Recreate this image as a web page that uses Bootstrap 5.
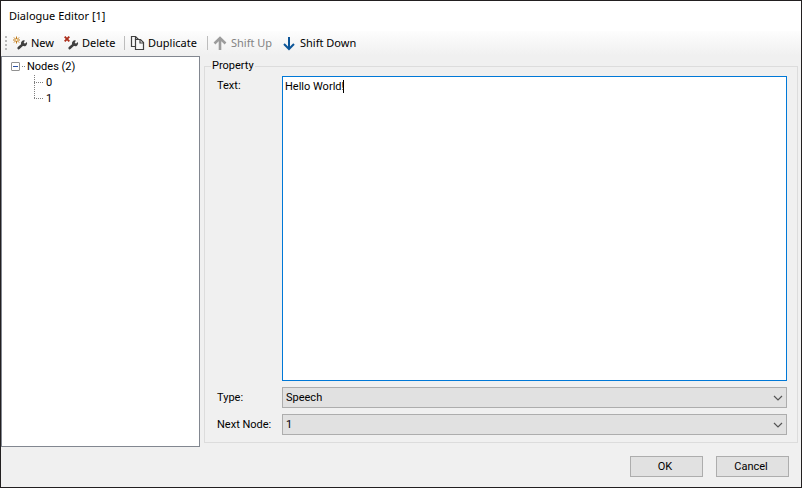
<!DOCTYPE html>
<html lang="en">
<head>
<meta charset="utf-8">
<meta name="viewport" content="width=device-width, initial-scale=1">
<title>Dialogue Editor [1]</title>
<link href="https://cdn.jsdelivr.net/npm/bootstrap@5.3.0/dist/css/bootstrap.min.css" rel="stylesheet">
<style>
body{font:11px/16px Roboto,"Liberation Sans",sans-serif;color:#000;background:#f0f0f0}
.window{border:1px solid #221f20}
.titlebar{font:11px/30px "Noto Sans","Open Sans",sans-serif;background:#fff;padding:0 8px}
.toolbar{font:11px/16px "Noto Sans","Open Sans",sans-serif;height:25px;background:linear-gradient(#fdfdfd,#f0f0f0);padding:0 0 2px 4px}
.grip{width:2px;height:14px;margin-right:6px;background:repeating-linear-gradient(#b8b8b8 0 2px,transparent 2px 4px)}
.tool{font:inherit;color:#000;border:0;background:none;padding:0;display:flex;align-items:center;gap:2px;white-space:nowrap}
.tool:disabled{color:#838383}
.tool svg{width:16px;height:16px;flex:none}
.w-new{width:51px}.w-delete{width:56px}.w-copy{width:73px}.w-up{width:69px}
.divider{width:1px;height:14px;margin:0 5px 0 4px;background:#bdbdbd}
.tree{width:199px;background:#fff;border:1px solid #828790;padding:0 9px}
.tree ul{list-style:none;margin:0;padding:0}
.root-row{gap:2px}
.root-name{padding-top:2px}
.toggler{width:9px;height:9px;padding:0;border:1px solid #919191;border-radius:1px;background:#fff;display:flex;align-items:center;justify-content:center}
.toggler::before{content:"";width:5px;height:1px;background:#2b52a5}
.stub{width:3px;border-top:1px dotted #808080}
.tree .branch{margin-left:23px}
.branch li{display:flex;height:16px;background:repeating-linear-gradient(#808080 0 1px,transparent 1px 2px) 0 0/1px 100% no-repeat}
.branch li:last-child{background-size:1px 8px}
.branch li::before{content:"";width:9px;margin:7px 3px 0 0;border-top:1px dotted #808080}
.workarea{padding:2px 3px 4px 4px}
.group{border:1px solid #dcdcdc;padding:2px 10px 7px 12px}
.group legend{float:none;width:auto;font-size:11px;line-height:16px;margin:0 0 0 -6px;padding:0 1px}
.form-grid{display:grid;grid-template-columns:65px 1fr;grid-template-rows:1fr 21px 21px;row-gap:6px}
.label-top{padding-top:2px}
.field-text{resize:none;border:1px solid #0078d7;padding:2px;background:#fff;font:inherit;color:#000;outline:0}
.caret{left:61px;top:4px;width:1px;height:13px;background:#000}
.combo{appearance:none;font:inherit;color:#000;border:1px solid #adadad;border-radius:0;padding:0 3px;background:#e1e1e1 url("data:image/svg+xml,%3Csvg xmlns='http://www.w3.org/2000/svg' width='10' height='6'%3E%3Cpath d='M1 1l4 4 4-4' fill='none' stroke='%23555' stroke-width='1.2'/%3E%3C/svg%3E") right 3px center no-repeat}
.footer-bar{gap:13px;padding:9px 12px 10px}
.push{width:73px;height:21px;padding:0 3px 0 0;border:1px solid #adadad;background:#e1e1e1;font:inherit;color:#000}
</style>
<script src="https://cdn.jsdelivr.net/npm/bootstrap@5.3.0/dist/js/bootstrap.bundle.min.js"></script>
</head>
<body>
<div class="window d-flex flex-column min-vh-100">
  <header class="titlebar">Dialogue Editor [1]</header>
  <div class="toolbar d-flex align-items-center" role="toolbar" aria-label="Nodes">
    <span class="grip"></span>
    <button type="button" class="tool w-new">
      <svg viewBox="0 0 16 16"><path d="M3.500 1.500v7M0 5h7M1 2.500l5 5M6 2.500l-5 5" stroke="#c17a18" stroke-width="1"/><circle cx="3.500" cy="5" r="1.100" fill="#fff4d8"/><g transform="translate(2 2) scale(.82)"><path d="M4.500 13.500l5-4.500" stroke="#404040" stroke-width="3.200" stroke-linecap="round"/><path d="M7.500 9a3.500 3.500 0 0 1 4.800-4.500L10.500 6.500l1.600 1.600 2.300-1.900a3.500 3.500 0 0 1-4.900 4.600z" fill="#404040"/></g></svg>New</button>
    <button type="button" class="tool w-delete">
      <svg viewBox="0 0 16 16"><path d="M.700 1.700l4.600 4.600M5.300 1.700L.700 6.300" stroke="#ad2f1c" stroke-width="1.900"/><g transform="translate(2 2) scale(.82)"><path d="M4.500 13.500l5-4.500" stroke="#404040" stroke-width="3.200" stroke-linecap="round"/><path d="M7.500 9a3.500 3.500 0 0 1 4.800-4.500L10.500 6.500l1.600 1.600 2.300-1.900a3.500 3.500 0 0 1-4.900 4.600z" fill="#404040"/></g></svg>Delete</button>
    <span class="divider"></span>
    <button type="button" class="tool w-copy">
      <svg viewBox="0 0 16 16" fill="#f8f8f8" stroke="#404040" stroke-width="1.200"><path d="M5 11.500H1.500v-10h4l3 3"/><path d="M5.500 1.500v3"/><path d="M5.500 4.500h5l3 3v7h-8z"/><path d="M10 4.500v3.500h3.500" fill="none"/></svg>Duplicate</button>
    <span class="divider"></span>
    <button type="button" class="tool w-up" disabled>
      <svg viewBox="0 0 16 16" fill="none" stroke="#9c9c9c" stroke-width="2.600"><path d="M7 15V3M1.500 8.500L7 3l5.500 5.500"/></svg>Shift Up</button>
    <button type="button" class="tool">
      <svg viewBox="0 0 16 16" fill="none" stroke="#0c5598" stroke-width="2"><path d="M7 2v12M2 9l5 5 5-5"/></svg>Shift Down</button>
  </div>
  <main class="d-flex flex-grow-1">
    <nav class="tree flex-shrink-0" aria-label="Node tree">
      <ul>
        <li>
          <div class="root-row d-flex align-items-center"><button type="button" class="toggler" aria-label="Collapse Nodes"></button><span class="stub"></span><span class="root-name">Nodes (2)</span></div>
          <ul class="branch"><li>0</li><li>1</li></ul>
        </li>
      </ul>
    </nav>
    <div class="workarea d-flex flex-grow-1">
      <fieldset class="group d-flex flex-column flex-grow-1">
        <legend>Property</legend>
        <div class="form-grid flex-grow-1">
          <label for="text" class="label-top">Text:</label>
          <div class="position-relative d-flex"><textarea id="text" class="field-text w-100" spellcheck="false">Hello World!</textarea><span class="caret position-absolute"></span></div>
          <label for="type" class="align-self-center">Type:</label>
          <select id="type" class="combo"><option>Speech</option></select>
          <label for="next" class="align-self-center">Next Node:</label>
          <select id="next" class="combo"><option>0</option><option selected>1</option></select>
        </div>
      </fieldset>
    </div>
  </main>
  <footer class="footer-bar d-flex justify-content-end">
    <button type="button" class="push">OK</button>
    <button type="button" class="push">Cancel</button>
  </footer>
</div>
</body>
</html>
